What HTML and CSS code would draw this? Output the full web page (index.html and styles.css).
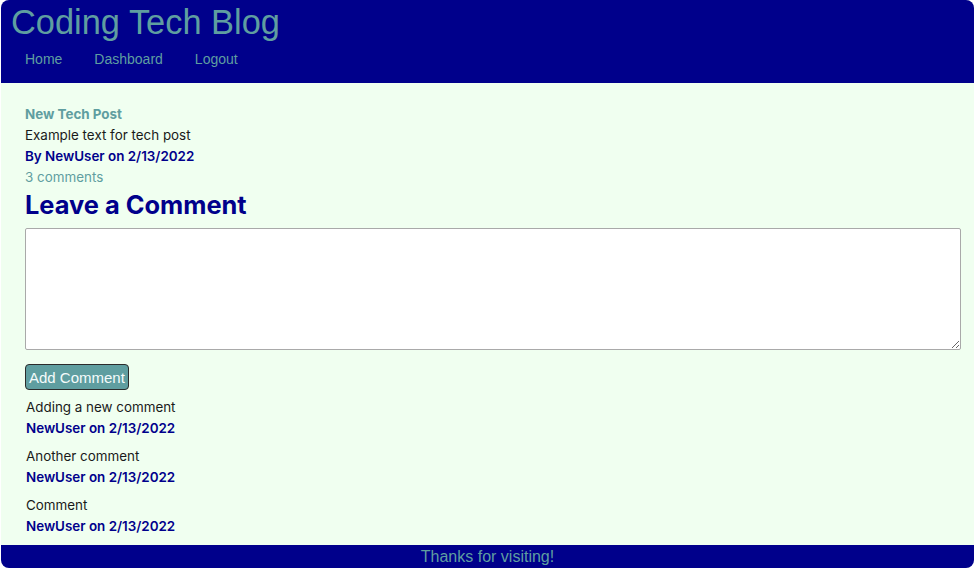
FILE: index.html
```html
<!DOCTYPE html>
<html lang="en">
<head>
<meta charset="utf-8">
<title>Coding Tech Blog</title>
<link rel="stylesheet" href="styles.css">
</head>
<body>
<div class="window">
  <header class="site-header">
    <h1 class="site-title">Coding Tech Blog</h1>
    <nav class="nav">
      <a class="nav-link" href="#">Home</a>
      <a class="nav-link" href="#">Dashboard</a>
      <a class="nav-link" href="#">Logout</a>
    </nav>
  </header>
  <main class="main">
    <article class="post">
      <h3 class="post-title">New Tech Post</h3>
      <p class="post-body">Example text for tech post</p>
      <p class="post-meta">By NewUser on 2/13/2022</p>
      <p class="post-count">3 comments</p>
    </article>
    <h2 class="comment-heading">Leave a Comment</h2>
    <form class="comment-form">
      <textarea class="comment-input"></textarea>
      <button class="comment-btn" type="button">Add Comment</button>
    </form>
    <ul class="comments">
      <li class="comment">
        <p class="comment-text">Adding a new comment</p>
        <p class="comment-meta">NewUser on 2/13/2022</p>
      </li>
      <li class="comment">
        <p class="comment-text">Another comment</p>
        <p class="comment-meta">NewUser on 2/13/2022</p>
      </li>
      <li class="comment">
        <p class="comment-text">Comment</p>
        <p class="comment-meta">NewUser on 2/13/2022</p>
      </li>
    </ul>
  </main>
  <footer class="site-footer">Thanks for visiting!</footer>
</div>
</body>
</html>
```

FILE: styles.css
```css
* { box-sizing: border-box; }
html, body { margin: 0; padding: 0; background: #ffffff; }
body { height: 570px; }

.window {
  margin: 0 3px 0 1px;
  height: 568px;
  border-radius: 8px;
  overflow: hidden;
  background: #f0fff0;
  display: flex;
  flex-direction: column;
}

.site-header {
  background: #00008b;
  height: 83px;
  padding: 0 10px;
  font-family: "Liberation Sans", Arial, sans-serif;
}
.site-title {
  margin: 0;
  padding-top: 3px;
  font-size: 34.4px;
  font-weight: 400;
  line-height: 38px;
  color: #5f9ea0;
}
.nav {
  display: flex;
  gap: 32px;
  padding-left: 14px;
  margin-top: 9px;
}
.nav-link {
  color: #5f9ea0;
  text-decoration: none;
  font-size: 14px;
  line-height: 18px;
}

.main {
  flex: 1;
  padding: 21px 13px 0 24px;
  font-family: Inter, "Liberation Sans", sans-serif;
  font-size: 13.4px;
  line-height: 21px;
  color: #1a1a1a;
}
.post-title, .post-body, .post-meta, .post-count { margin: 0; }
.post-title { font-size: 13.4px; font-weight: 700; color: #5f9ea0; }
.post-meta { font-weight: 600; color: #00008b; }
.post-count { color: #5f9ea0; }

.comment-heading {
  margin: 0;
  font-size: 25.4px;
  line-height: 34px;
  font-weight: 700;
  color: #00008b;
}
.comment-form { display: flex; flex-direction: column; align-items: flex-start; }
.comment-input {
  display: block;
  width: 100%;
  height: 122px;
  margin-top: 6px;
  border: 1px solid #a9a9a9;
  border-radius: 2px;
  background: #fff;
}
.comment-btn {
  margin-top: 14px;
  height: 26px;
  padding: 0 3px;
  font-family: "Liberation Sans", Arial, sans-serif;
  font-size: 15px;
  color: #f4fbfb;
  background: #5f9ea0;
  border: 1px solid #2b2b2b;
  border-radius: 4px;
}

.comments { list-style: none; margin: 7px 0 0; padding: 0 0 0 1px; }
.comment { margin-bottom: 7px; }
.comment-text, .comment-meta { margin: 0; }
.comment-meta { font-weight: 600; color: #00008b; }

.site-footer {
  background: #00008b;
  height: 23px;
  text-align: center;
  font-family: "Liberation Sans", Arial, sans-serif;
  font-size: 16px;
  line-height: 23px;
  color: #5f9ea0;
}
```
